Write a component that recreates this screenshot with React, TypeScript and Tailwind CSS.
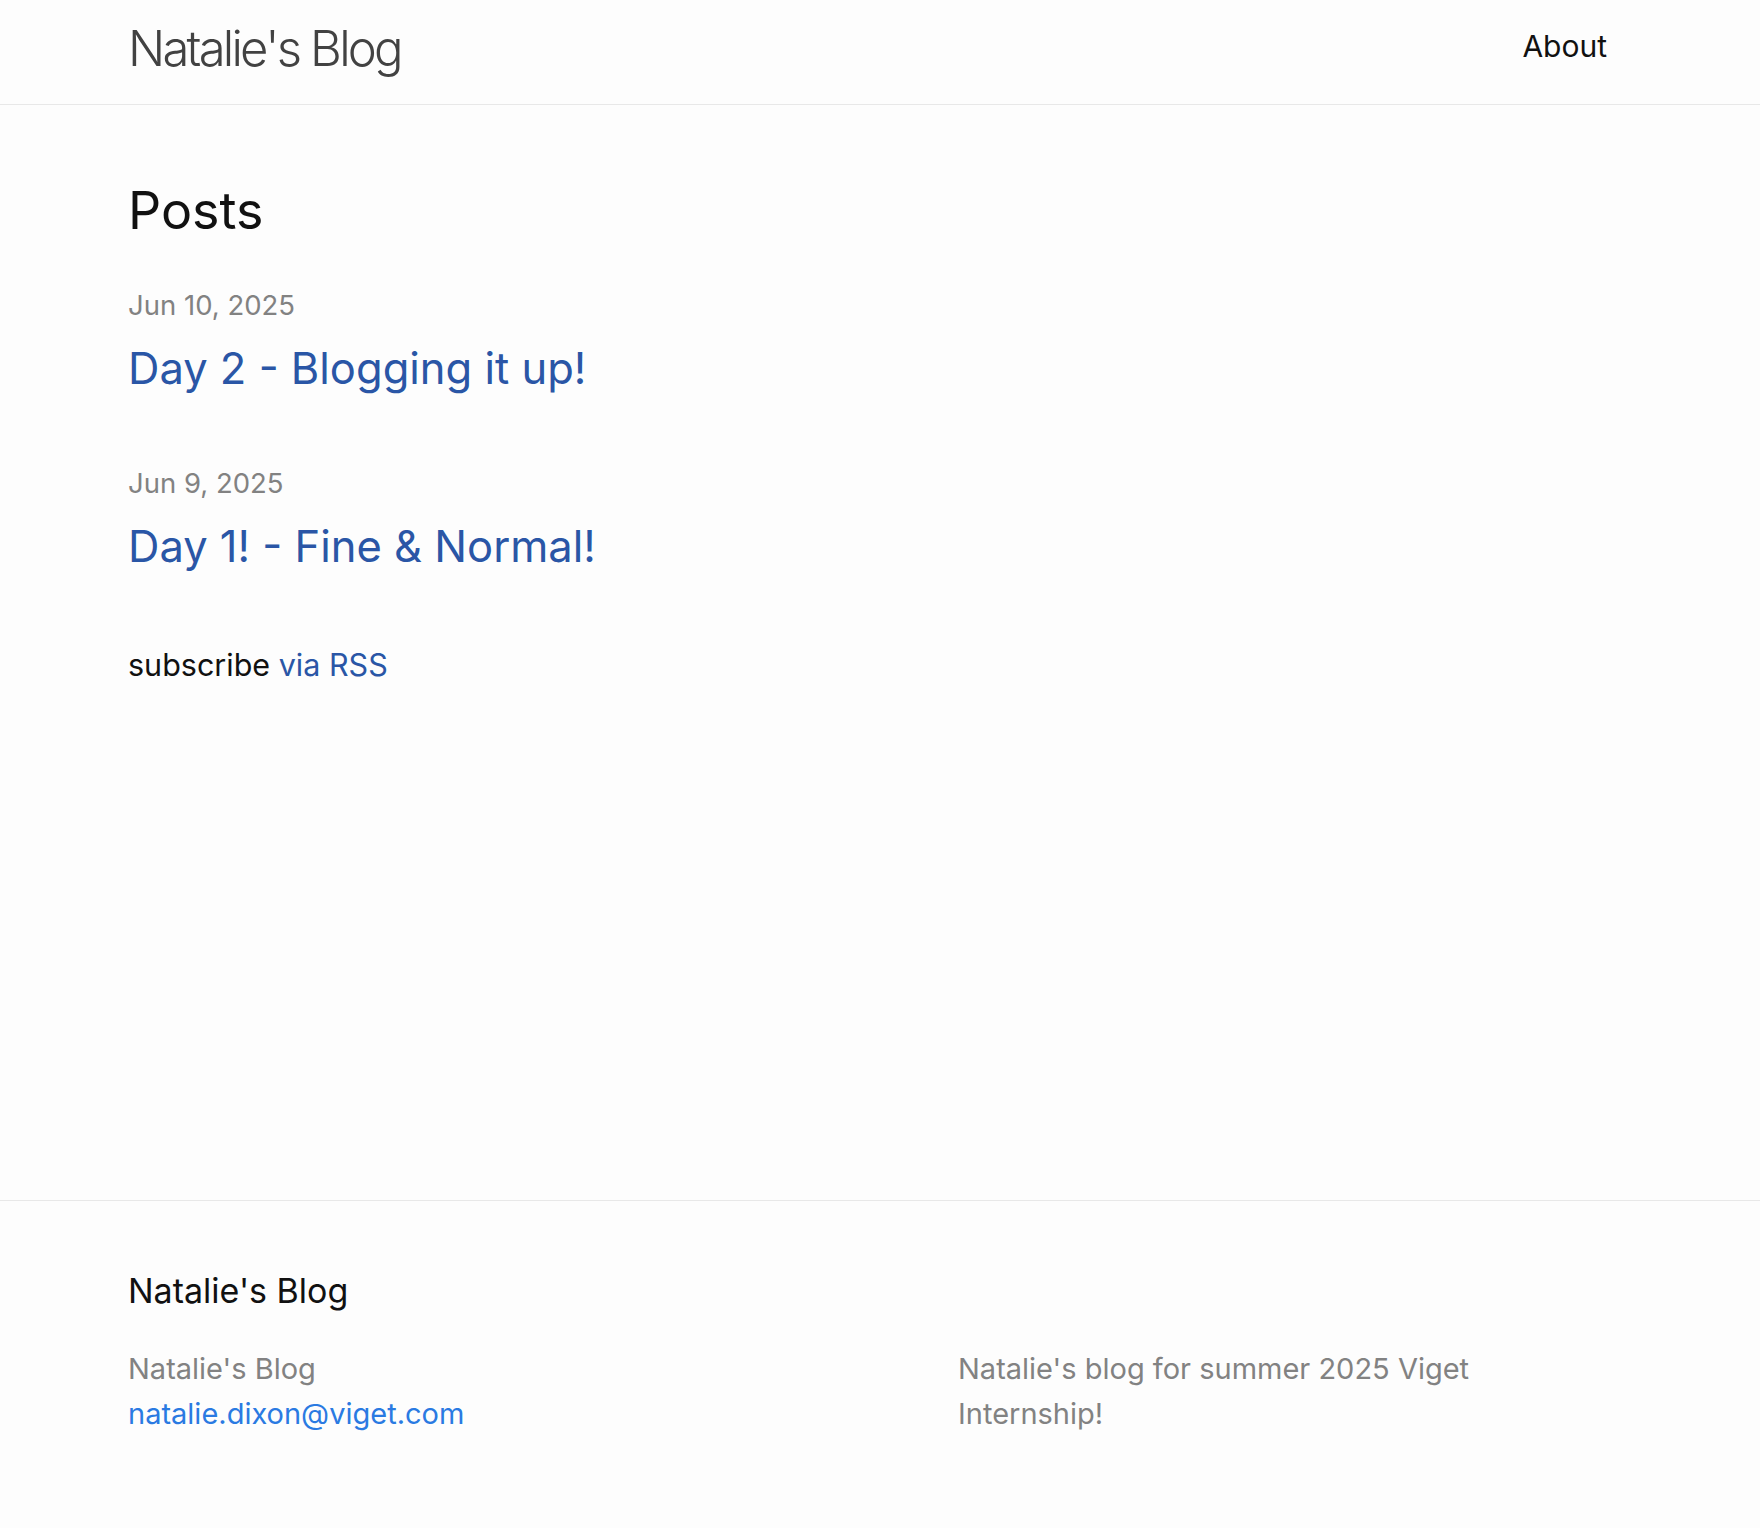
const posts = [
  { date: "Jun 10, 2025", title: "Day 2 - Blogging it up!" },
  { date: "Jun 9, 2025", title: "Day 1! - Fine & Normal!" },
];

export default function App() {
  return (
    <div className="min-h-screen flex flex-col bg-[#fdfdfd] text-[#111] font-['Inter','Liberation_Sans',sans-serif]">
      <header className="h-[105px] border-b border-[#e8e8e8]">
        <div className="pl-[128px] pr-[153px] flex justify-between items-start">
          <a className="text-[49px] leading-[98px] font-light tracking-[-2.8px] text-[#424242]">
            Natalie's Blog
          </a>
          <nav className="pt-[24px]">
            <a className="text-[30px] leading-[45px] text-[#111]">About</a>
          </nav>
        </div>
      </header>

      <main className="flex-1 pl-[128px] pr-[153px] pt-[75px]">
        <h2 className="text-[52px] leading-[62px] mb-[44px]">Posts</h2>
        <ul>
          {posts.map((p) => (
            <li key={p.date} className="mb-[71px]">
              <div className="text-[27.5px] leading-[39px] text-[#828282] mb-[18px]">{p.date}</div>
              <a className="block text-[43.5px] leading-[50px] text-[#2a56a6]">{p.title}</a>
            </li>
          ))}
        </ul>
        <p className="text-[30.5px] leading-[45px]">
          subscribe <a className="text-[#2a56a6]">via RSS</a>
        </p>
      </main>

      <footer className="border-t border-[#e8e8e8] pt-[70px] pb-[92px]">
        <div className="pl-[128px] pr-[153px]">
          <h2 className="text-[34px] leading-[40px] mb-[35px]">Natalie's Blog</h2>
          <div className="flex text-[29px] leading-[45px] text-[#828282]">
            <div className="w-[830px] shrink-0">
              <div>Natalie's Blog</div>
              <a className="block text-[#2a7ae2]">natalie.dixon@viget.com</a>
            </div>
            <div className="w-[640px]">Natalie's blog for summer 2025 Viget Internship!</div>
          </div>
        </div>
      </footer>
    </div>
  );
}
